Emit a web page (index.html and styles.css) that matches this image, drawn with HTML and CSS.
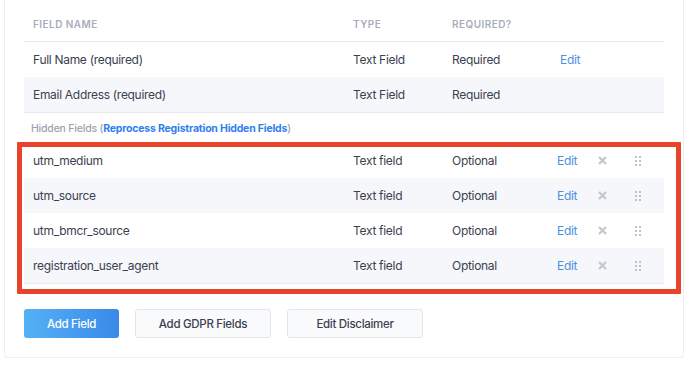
FILE: index.html
```html
<!DOCTYPE html>
<html lang="en">
<head>
    <meta charset="UTF-8">
    <meta name="viewport" content="width=device-width, initial-scale=1.0">
    <title>Registration Fields</title>
    <link rel="stylesheet" href="styles.css">
</head>
<body>

    <div class="card">
        <div class="row head">
            <div>Field Name</div>
            <div>Type</div>
            <div>Required?</div>
            <div></div>
        </div>

        <div class="row">
            <div>Full Name (required)</div>
            <div>Text Field</div>
            <div>Required</div>
            <div class="actions first"><a class="edit" href="#">Edit</a></div>
        </div>
        <div class="row shaded last">
            <div>Email Address (required)</div>
            <div>Text Field</div>
            <div>Required</div>
            <div></div>
        </div>

        <div class="hidden-label">
            Hidden Fields (<a href="#">Reprocess Registration Hidden Fields</a>)
        </div>

        <!-- hidden fields, highlighted with the red box -->
        <div class="hidden-group">
            <div class="row">
                <div>utm_medium</div>
                <div>Text field</div>
                <div>Optional</div>
                <div class="actions">
                    <a class="edit" href="#">Edit</a>
                    <span class="remove"><svg width="9" height="9" viewBox="0 0 9 9"><path d="M1 1L8 8M8 1L1 8" stroke="#c3c7ce" stroke-width="2.2"/></svg></span>
                    <span class="drag"><i></i><i></i><i></i><i></i><i></i><i></i></span>
                </div>
            </div>
            <div class="row shaded">
                <div>utm_source</div>
                <div>Text field</div>
                <div>Optional</div>
                <div class="actions">
                    <a class="edit" href="#">Edit</a>
                    <span class="remove"><svg width="9" height="9" viewBox="0 0 9 9"><path d="M1 1L8 8M8 1L1 8" stroke="#c3c7ce" stroke-width="2.2"/></svg></span>
                    <span class="drag"><i></i><i></i><i></i><i></i><i></i><i></i></span>
                </div>
            </div>
            <div class="row">
                <div>utm_bmcr_source</div>
                <div>Text field</div>
                <div>Optional</div>
                <div class="actions">
                    <a class="edit" href="#">Edit</a>
                    <span class="remove"><svg width="9" height="9" viewBox="0 0 9 9"><path d="M1 1L8 8M8 1L1 8" stroke="#c3c7ce" stroke-width="2.2"/></svg></span>
                    <span class="drag"><i></i><i></i><i></i><i></i><i></i><i></i></span>
                </div>
            </div>
            <div class="row shaded last">
                <div>registration_user_agent</div>
                <div>Text field</div>
                <div>Optional</div>
                <div class="actions">
                    <a class="edit" href="#">Edit</a>
                    <span class="remove"><svg width="9" height="9" viewBox="0 0 9 9"><path d="M1 1L8 8M8 1L1 8" stroke="#c3c7ce" stroke-width="2.2"/></svg></span>
                    <span class="drag"><i></i><i></i><i></i><i></i><i></i><i></i></span>
                </div>
            </div>
            <div class="highlight"></div>
        </div>

        <div class="buttons">
            <button class="btn primary">Add Field</button>
            <button class="btn">Add GDPR Fields</button>
            <button class="btn">Edit Disclaimer</button>
        </div>
    </div>

</body>
</html>
```

FILE: styles.css
```css
body {
    margin: 0;
    background-color: #fff;
    font-family: Inter, "Open Sans", sans-serif;
    color: #3b4150;
}

.card {
    margin-left: 4px;
    width: 680px;
    box-sizing: border-box;
    border: 1px solid #eceef1;
    border-top: none;
    border-radius: 0 0 4px 4px;
    padding: 0 19px 19px 19px;
}

.row {
    display: grid;
    grid-template-columns: 320px 99px 104px 1fr;
    align-items: center;
    height: 35px;
    padding-left: 9px;
    box-sizing: border-box;
    font-size: 12px;
    letter-spacing: -0.3px;
}

.row.shaded {
    background-color: #f6f7fa;
}

.row.last {
    border-bottom: 1px solid #e8eaee;
    height: 36px;
}

.row.head {
    height: 42px;
    padding-top: 7px;
    border-bottom: 1px solid #e6e8ec;
    font-size: 10px;
    font-weight: 600;
    letter-spacing: 0.45px;
    text-transform: uppercase;
    color: #a8aeb9;
}

.actions {
    display: flex;
    align-items: center;
    padding-left: 1px;
}

.actions.first {
    padding-left: 4px;
}

.edit {
    color: #4a90e2;
    text-decoration: none;
    width: 41px;
}

.remove {
    display: flex;
    width: 37px;
}

.drag {
    display: grid;
    grid-template-columns: 2px 2px;
    gap: 2px;
}

.drag i {
    width: 2px;
    height: 2px;
    background-color: #bcc1ca;
}

.hidden-label {
    height: 29px;
    padding-top: 1px;
    display: flex;
    align-items: center;
    padding-left: 7px;
    font-size: 10.5px;
    letter-spacing: -0.2px;
    font-weight: 500;
    color: #9ca3ae;
}

.hidden-label a {
    color: #2f80ed;
    font-weight: 700;
    text-decoration: none;
}

.hidden-group {
    position: relative;
}

/* red annotation box drawn over the hidden rows */
.highlight {
    position: absolute;
    left: -7px;
    right: -17px;
    top: -1px;
    bottom: -10px;
    border: 5px solid #e8432b;
    border-radius: 1px;
    pointer-events: none;
}

.buttons {
    display: flex;
    gap: 16px;
    margin-top: 25px;
}

.btn {
    height: 29px;
    width: 136px;
    border: 1px solid #e3e6ea;
    border-radius: 3px;
    background-color: #f9fafb;
    color: #3b4150;
    font-family: Inter, sans-serif;
    font-size: 11.5px;
    letter-spacing: -0.3px;
    font-weight: 500;
    cursor: pointer;
}

.btn.primary {
    width: 95px;
    border: none;
    background: linear-gradient(90deg, #55b1f6, #3a89e8);
    color: #fff;
}
```
